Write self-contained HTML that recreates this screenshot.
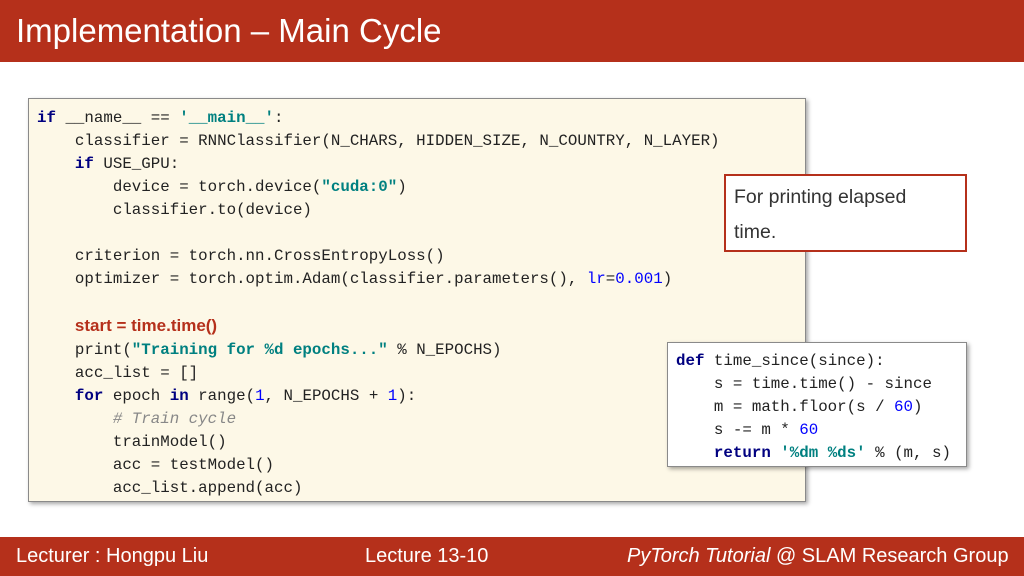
<!DOCTYPE html>
<html><head><meta charset="utf-8"><style>
body{margin:0;width:1024px;height:576px;position:relative;background:#fff;overflow:hidden;font-family:"Liberation Sans",sans-serif}
.hdr{position:absolute;left:0;top:0;width:1024px;height:62px;background:#b5301b;color:#fff;font-size:33px;line-height:62px;padding-left:16px;box-sizing:border-box}
.ftr{position:absolute;left:0;top:537px;width:1024px;height:39px;background:#b5301b;color:#fff;font-size:20px;line-height:39px}
.code{position:absolute;font-family:"Liberation Mono",monospace;font-size:15.8px;white-space:pre;line-height:23px;color:#222}
.box1{left:28px;top:98px;width:778px;height:404px;background:#fdf8e7;border:1px solid #8a8a8a;box-shadow:2px 2px 4px rgba(0,0,0,.35);padding:8px 0 0 8px;box-sizing:border-box}
.box2{left:667px;top:342px;width:300px;height:125px;background:#fff;border:1px solid #8a8a8a;box-shadow:2px 2px 4px rgba(0,0,0,.35);padding:7px 0 0 8px;box-sizing:border-box}
.k{color:#000080;font-weight:bold}.s{color:#008080;font-weight:bold}.n{color:#0000ff}.c{color:#888;font-style:italic}
.red{color:#b5301b;font-weight:bold;font-family:"Liberation Sans",sans-serif;font-size:17px}
.call{position:absolute;left:724px;top:174px;width:243px;height:78px;border:2px solid #b5301b;box-sizing:border-box;background:#fff;font-size:19.5px;line-height:35px;color:#333;padding:4px 0 0 8px}
</style></head><body>
<div class="hdr">Implementation – Main Cycle</div>
<div class="code box1"><span class="k">if</span> __name__ == <span class="s">'__main__'</span>:
    classifier = RNNClassifier(N_CHARS, HIDDEN_SIZE, N_COUNTRY, N_LAYER)
    <span class="k">if</span> USE_GPU:
        device = torch.device(<span class="s">"cuda:0"</span>)
        classifier.to(device)

    criterion = torch.nn.CrossEntropyLoss()
    optimizer = torch.optim.Adam(classifier.parameters(), <span class="n">lr</span>=<span class="n">0.001</span>)

    <span class="red">start = time.time()</span>
    print(<span class="s">"Training for %d epochs..."</span> % N_EPOCHS)
    acc_list = []
    <span class="k">for</span> epoch <span class="k">in</span> range(<span class="n">1</span>, N_EPOCHS + <span class="n">1</span>):
        <span class="c"># Train cycle</span>
        trainModel()
        acc = testModel()
        acc_list.append(acc)</div>
<div class="call">For printing elapsed<br>time.</div>
<div class="code box2"><span class="k">def</span> time_since(since):
    s = time.time() - since
    m = math.floor(s / <span class="n">60</span>)
    s -= m * <span class="n">60</span>
    <span class="k">return</span> <span class="s">'%dm %ds'</span> % (m, s)</div>
<div class="ftr"><span style="position:absolute;left:16px">Lecturer : Hongpu Liu</span><span style="position:absolute;left:365px">Lecture 13-10</span><span style="position:absolute;left:627px"><i>PyTorch Tutorial</i> @ SLAM Research Group</span></div>
</body></html>
